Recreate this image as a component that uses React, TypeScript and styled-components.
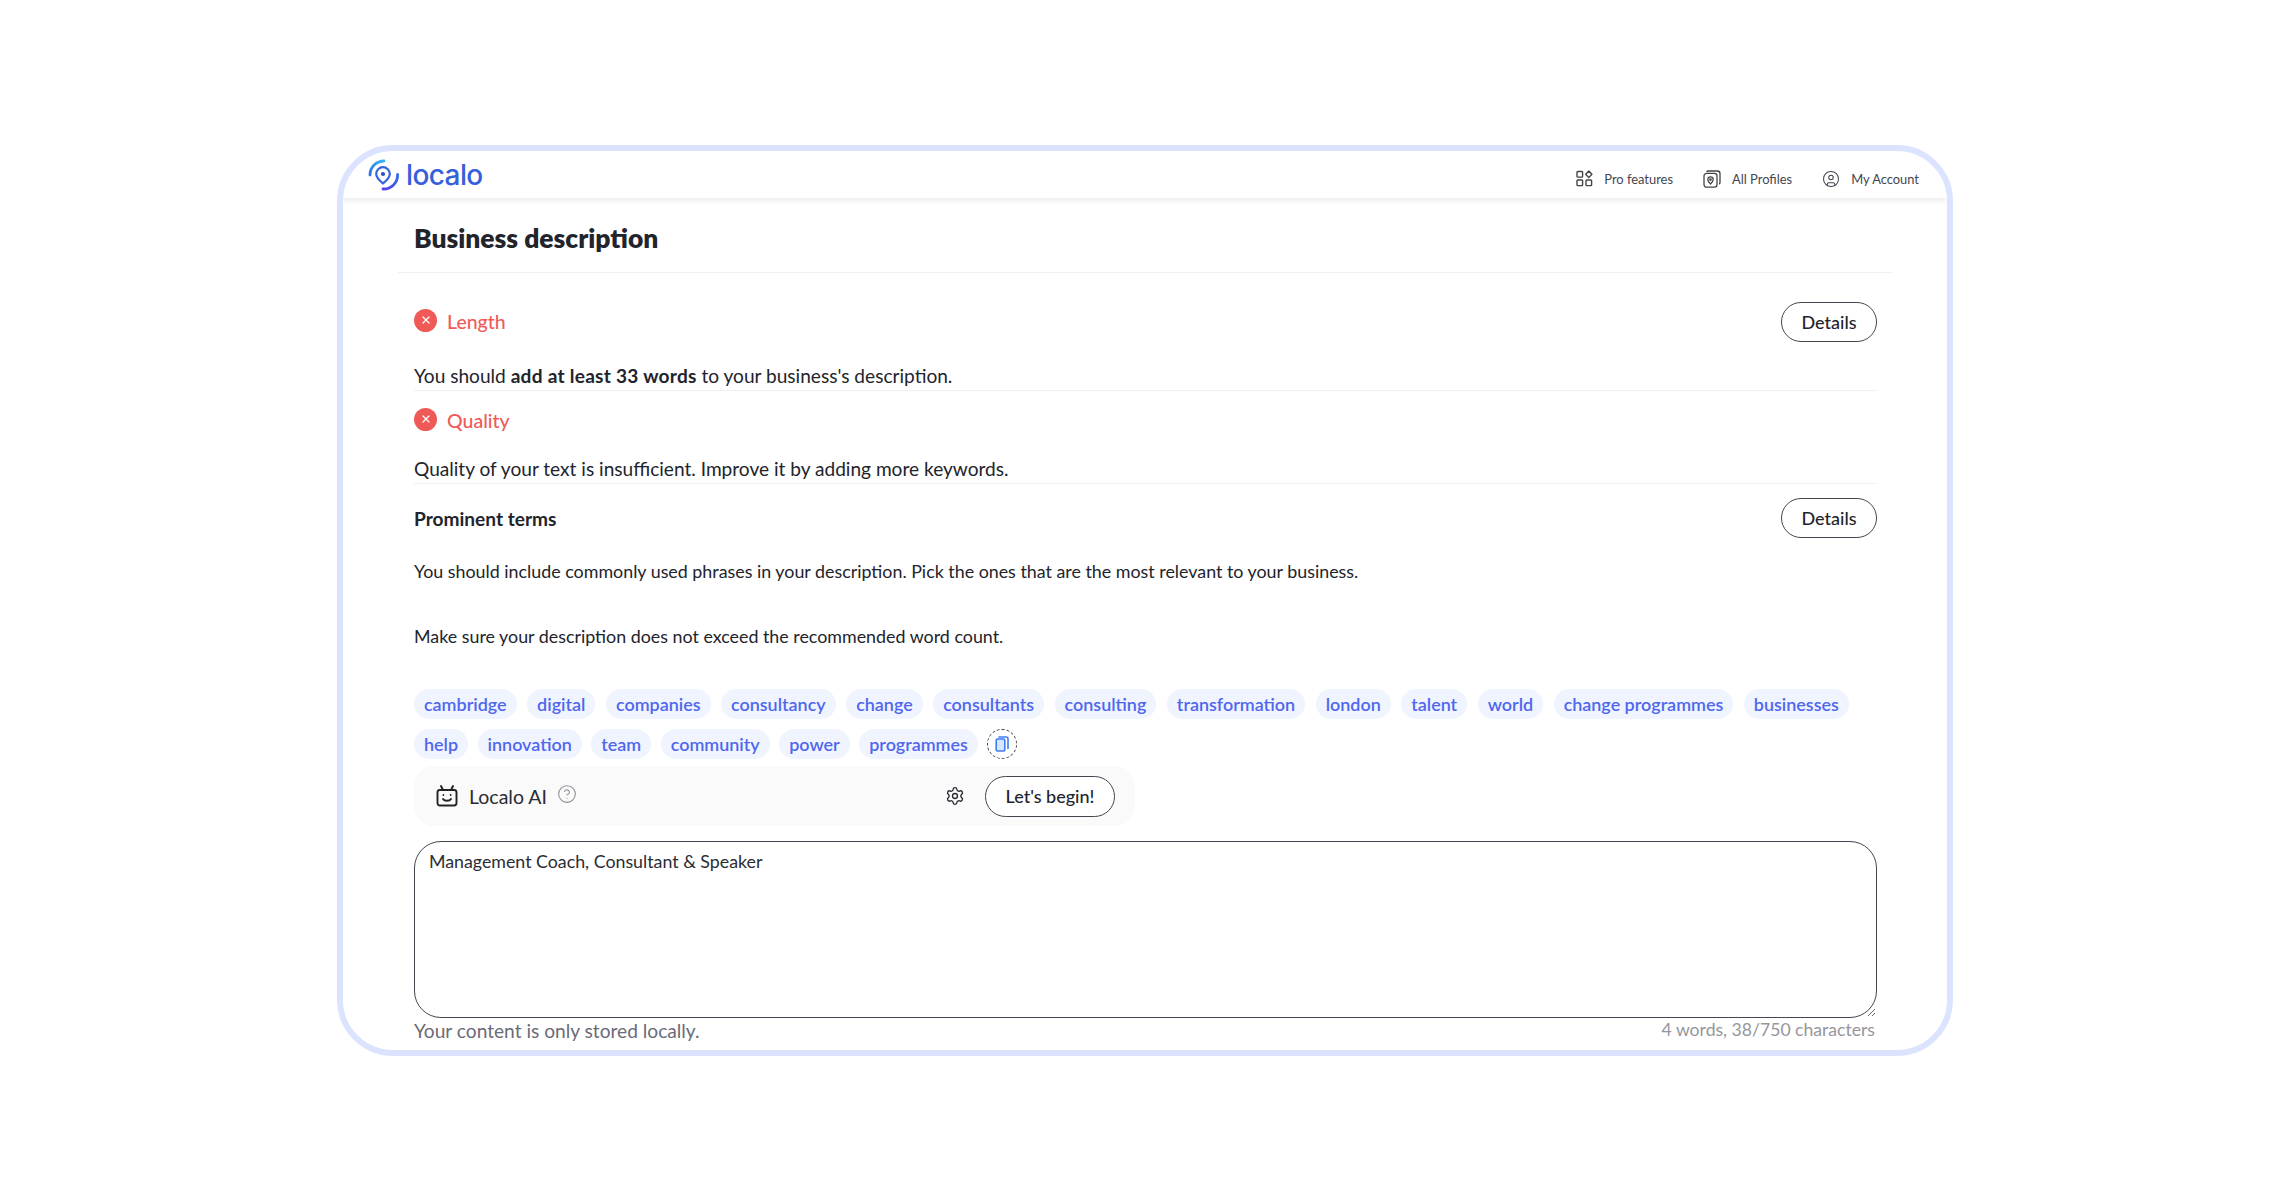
import styled, { createGlobalStyle } from "styled-components";
import { CircleHelp, CircleUser, Settings, X } from "lucide-react";

const firstRowTags = ["cambridge", "digital", "companies", "consultancy", "change", "consultants", "consulting", "transformation", "london", "talent", "world", "change programmes", "businesses"];
const secondRowTags = ["help", "innovation", "team", "community", "power", "programmes"];

function Logo() {
  return (
    <svg width="32" height="33" viewBox="0 0 32 33" fill="none">
      <defs>
        <linearGradient id="arcTop" x1="1" y1="16" x2="16" y2="1" gradientUnits="userSpaceOnUse">
          <stop offset="0" stopColor="#2f6fe8" />
          <stop offset="1" stopColor="#38b6f6" />
        </linearGradient>
        <linearGradient id="arcBottom" x1="30" y1="15" x2="14" y2="31" gradientUnits="userSpaceOnUse">
          <stop offset="0" stopColor="#2f6fe0" />
          <stop offset="1" stopColor="#5a3df0" />
        </linearGradient>
      </defs>
      <path d="M2 16 A14 14 0 0 1 16 2" stroke="url(#arcTop)" strokeWidth="2.8" strokeLinecap="round" />
      <path d="M29.6 15.5 A14 14 0 0 1 15 30" stroke="url(#arcBottom)" strokeWidth="2.8" strokeLinecap="round" />
      <path d="M15 24.5 C12 22 8.2 19 8.2 15 A6.8 6.8 0 0 1 21.8 15 C21.8 19 18 22 15 24.5 Z" stroke="#3565dc" strokeWidth="2.2" strokeLinejoin="round" />
      <circle cx="15" cy="15" r="2.1" fill="#2c50c8" />
    </svg>
  );
}

function ProIcon() {
  return (
    <svg width="17" height="17" viewBox="0 0 17 17" fill="none" stroke="#444" strokeWidth="1.4">
      <rect x="1" y="1.5" width="5.6" height="5.6" rx="0.8" />
      <rect x="1" y="10" width="5.6" height="5.6" rx="0.8" />
      <rect x="10" y="10" width="5.6" height="5.6" rx="0.8" />
      <path d="M12.8 0.9 L15.9 4.2 L12.8 7.6 L9.7 4.2 Z" strokeLinejoin="round" />
    </svg>
  );
}

function ProfilesIcon() {
  return (
    <svg width="18" height="18" viewBox="0 0 18 18" fill="none" stroke="#444" strokeWidth="1.3">
      <rect x="1" y="3.4" width="13" height="13.8" rx="2.6" />
      <path d="M3.6 1.8 C4 1.2 4.4 1 5.2 1 H14.4 C16 1 17 2 17 3.6 V12.6 C17 13.3 16.7 13.8 16.2 14.2" />
      <path d="M7.5 14 C6 12.6 4.8 11.4 4.8 9.6 A2.7 2.7 0 0 1 10.2 9.6 C10.2 11.4 9 12.6 7.5 14 Z" strokeLinejoin="round" />
      <circle cx="7.5" cy="9.6" r="0.7" />
    </svg>
  );
}

function RobotIcon() {
  return (
    <svg width="22" height="22" viewBox="0 0 22 22" fill="none" stroke="#222" strokeWidth="1.9">
      <rect x="1.5" y="5" width="19" height="15.5" rx="2.4" />
      <path d="M7 5 L5 1 M15 5 L17 1" strokeLinecap="round" />
      <path d="M7 14 C8.5 16.4 13.5 16.4 15 14" strokeLinecap="round" />
      <circle cx="7.4" cy="10" r="0.9" fill="#222" stroke="none" />
      <circle cx="14.6" cy="10" r="0.9" fill="#222" stroke="none" />
    </svg>
  );
}

function CopyIcon() {
  return (
    <svg width="14" height="16" viewBox="0 0 14 16" fill="none" stroke="#3f7cf2" strokeWidth="1.6">
      <rect x="1.2" y="3" width="8.6" height="12" rx="1.2" fill="#d7e6ff" />
      <path d="M4 1 H11 C12.2 1 13 1.8 13 3 V12.4" strokeLinecap="round" />
    </svg>
  );
}

function App() {
  return (
    <Page>
      <GlobalStyle />
      <Frame>
        <Header>
          <Brand>
            <Logo />
            <BrandName>localo</BrandName>
          </Brand>
          <Nav>
            <NavItem><ProIcon />Pro features</NavItem>
            <NavItem><ProfilesIcon />All Profiles</NavItem>
            <NavItem><CircleUser size={18} strokeWidth={1.4} />My Account</NavItem>
          </Nav>
        </Header>
        <TitleBar>
          <Title>Business description</Title>
        </TitleBar>
        <Content>
          <CheckRow $first>
            <Status><ErrorBadge><X size={12} strokeWidth={2.4} /></ErrorBadge>Length</Status>
            <OutlineButton>Details</OutlineButton>
          </CheckRow>
          <CheckText $gap={22}>You should <strong>add at least 33 words</strong> to your business's description.</CheckText>
          <CheckRow>
            <Status><ErrorBadge><X size={12} strokeWidth={2.4} /></ErrorBadge>Quality</Status>
          </CheckRow>
          <CheckText $gap={23}>Quality of your text is insufficient. Improve it by adding more keywords.</CheckText>
          <TermsRow>
            <TermsTitle>Prominent terms</TermsTitle>
            <OutlineButton>Details</OutlineButton>
          </TermsRow>
          <Hint>You should include commonly used phrases in your description. Pick the ones that are the most relevant to your business.</Hint>
          <Hint $gap={41}>Make sure your description does not exceed the recommended word count.</Hint>
          <TagRow $first>
            {firstRowTags.map((tag) => <Tag key={tag}>{tag}</Tag>)}
          </TagRow>
          <TagRow>
            {secondRowTags.map((tag) => <Tag key={tag}>{tag}</Tag>)}
            <CopyButton><CopyIcon /></CopyButton>
          </TagRow>
          <AiPanel>
            <RobotIcon />
            <AiName>Localo AI</AiName>
            <HelpMark><CircleHelp size={20} strokeWidth={1.3} /></HelpMark>
            <GearMark><Settings size={20} strokeWidth={1.6} /></GearMark>
            <BeginButton>Let's begin!</BeginButton>
          </AiPanel>
          <Editor defaultValue="Management Coach, Consultant & Speaker" />
          <Footer>
            <StoredNote>Your content is only stored locally.</StoredNote>
            <Counter>4 words, 38/750 characters</Counter>
          </Footer>
        </Content>
      </Frame>
    </Page>
  );
}

const GlobalStyle = createGlobalStyle`
  * { box-sizing: border-box; }
  html, body { margin: 0; background: #fff; }
  body { font-family: "Lato", "Open Sans", sans-serif; color: #22242c; }
`;

const Page = styled.div`
  width: 2290px;
  height: 1200px;
  padding: 145px 337px 0;
`;

const Frame = styled.div`
  width: 1616px;
  height: 911px;
  border: 6px solid #dce3fe;
  border-radius: 56px;
  overflow: hidden;
  background: #fff;
`;

const Header = styled.header`
  height: 47px;
  padding: 8px 28px 0 25px;
  display: flex;
  justify-content: space-between;
  box-shadow: 0 2px 6px rgba(30, 30, 60, 0.1);
  position: relative;
`;

const Brand = styled.div`
  display: flex;
  align-items: flex-start;
  gap: 6px;
`;

const BrandName = styled.span`
  font-family: "Inter", sans-serif;
  font-size: 28px;
  line-height: 32px;
  font-weight: 500;
  color: #3560dc;
  letter-spacing: -0.6px;
`;

const Nav = styled.nav`
  display: flex;
  gap: 30px;
  padding-top: 10px;
`;

const NavItem = styled.div`
  display: flex;
  align-items: center;
  gap: 11px;
  height: 19px;
  font-size: 12.9px;
  color: #444650;
`;

const TitleBar = styled.div`
  height: 75px;
  margin: 0 54px 0 55px;
  padding: 23px 0 0 16px;
  border-bottom: 1px solid #f0f0f2;
`;

const Title = styled.h1`
  margin: 0;
  font-size: 26.4px;
  line-height: 34px;
  font-weight: 800;
  color: #22242c;
`;

const Content = styled.main`
  padding: 0 70px 0 71px;
`;

const CheckRow = styled.div<{ $first?: boolean }>`
  display: flex;
  justify-content: space-between;
  align-items: center;
  margin-top: ${(p) => (p.$first ? "29px" : "0")};
  padding-top: ${(p) => (p.$first ? "0" : "17px")};
`;

const Status = styled.div`
  display: flex;
  align-items: center;
  gap: 10px;
  font-size: 19.5px;
  line-height: 26px;
  font-weight: 500;
  color: #f05a57;
`;

const ErrorBadge = styled.span`
  width: 23px;
  height: 23px;
  border-radius: 50%;
  background: #ef5a57;
  color: #fff;
  display: flex;
  align-items: center;
  justify-content: center;
  transform: translateY(-2px);
`;

const OutlineButton = styled.button`
  width: 96px;
  height: 40px;
  border: 1.5px solid #45454f;
  border-radius: 20px;
  background: #fff;
  font: 500 18px "Lato", sans-serif;
  color: #22242c;
  padding: 0;
`;

const CheckText = styled.p<{ $gap: number }>`
  margin: ${(p) => p.$gap}px 0 0;
  padding-bottom: 2px;
  border-bottom: 1px solid #f0f0f2;
  font-size: 19.1px;
  line-height: 24px;
  color: #22242c;

  strong {
    font-weight: 700;
    letter-spacing: 0.25px;
  }
`;

const TermsRow = styled.div`
  display: flex;
  justify-content: space-between;
  align-items: center;
  margin-top: 14px;
`;

const TermsTitle = styled.h2`
  margin: 0;
  font-size: 19.1px;
  font-weight: 700;
  color: #22242c;
`;

const Hint = styled.p<{ $gap?: number }>`
  margin: ${(p) => p.$gap ?? 21}px 0 0;
  font-size: 17.85px;
  line-height: 24px;
  color: #22242c;
`;

const TagRow = styled.div<{ $first?: boolean }>`
  display: flex;
  align-items: center;
  gap: ${(p) => (p.$first ? "10.5px" : "9.5px")};
  margin-top: ${(p) => (p.$first ? "41px" : "10px")};
`;

const Tag = styled.span`
  height: 30px;
  padding: 0 10px;
  border-radius: 15px;
  background: #f0f4ff;
  color: #4f67ee;
  font-size: 17.95px;
  font-weight: 600;
  line-height: 30px;
  white-space: nowrap;
`;

const CopyButton = styled.span`
  width: 30px;
  height: 30px;
  border: 1px dashed #45454f;
  border-radius: 50%;
  display: flex;
  align-items: center;
  justify-content: center;
`;

const AiPanel = styled.div`
  width: 721px;
  height: 60px;
  margin-top: 7px;
  padding: 0 20px 0 22px;
  display: flex;
  align-items: center;
  border-radius: 20px;
  background: #fafafa;
`;

const AiName = styled.span`
  margin-left: 11px;
  font-size: 19.5px;
  color: #2a2c34;
`;

const HelpMark = styled.span`
  margin-left: 10px;
  height: 20px;
  color: #8f8f98;
  transform: translateY(-2px);
`;

const GearMark = styled.span`
  margin-left: auto;
  height: 20px;
  color: #2a2c34;
`;

const BeginButton = styled.button`
  width: 130px;
  height: 41px;
  margin-left: 20px;
  border: 1.5px solid #45454f;
  border-radius: 21px;
  background: #fff;
  font: 500 18px "Lato", sans-serif;
  color: #22242c;
  padding: 0;
`;

const Editor = styled.textarea`
  display: block;
  width: 1463px;
  height: 177px;
  margin-top: 15px;
  padding: 7px 14px;
  border: 1.5px solid #45454f;
  border-radius: 27px;
  outline: none;
  font: 400 17.8px/24px "Lato", sans-serif;
  color: #2a2c34;
`;

const Footer = styled.div`
  display: flex;
  justify-content: space-between;
  align-items: center;
  padding-right: 2px;
`;

const StoredNote = styled.span`
  font-size: 19.15px;
  line-height: 26px;
  color: #6b6b76;
`;

const Counter = styled.span`
  padding-bottom: 3px;
  font-size: 17.6px;
  color: #96969c;
`;

export default App;
